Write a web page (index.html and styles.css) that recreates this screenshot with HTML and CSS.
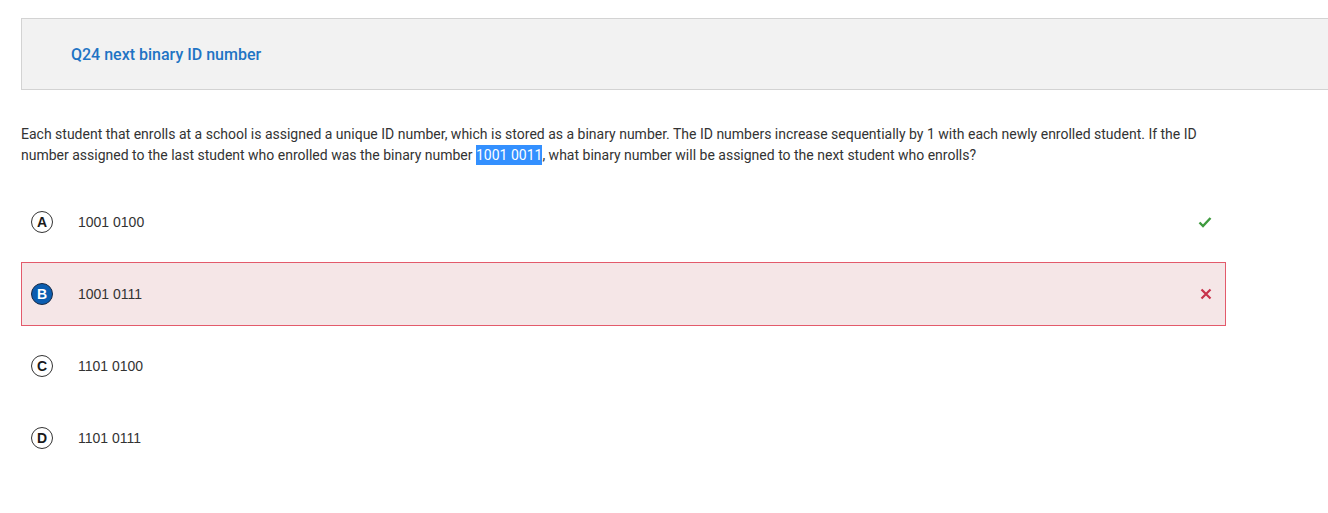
FILE: index.html
```html
<!DOCTYPE html>
<html>
<head>
<meta charset="utf-8">
<link rel="stylesheet" href="styles.css">
</head>
<body>
<div class="header"><h1 class="title">Q24 next binary ID number</h1></div>
<p class="question">Each student that enrolls at a school is assigned a unique ID number, which is stored as a binary number. The ID numbers increase sequentially by 1 with each newly enrolled student. If the ID number assigned to the last student who enrolled was the binary number <span class="sel">1001 0011</span>, what binary number will be assigned to the next student who enrolls?</p>
<ul class="options">
  <li class="option">
    <span class="letter">A</span><span class="text">1001 0100</span>
    <svg class="mark" width="14" height="12" viewBox="0 0 14 12"><path d="M1.5 6.5 L5 10 L12.5 2" fill="none" stroke="#3f9b3f" stroke-width="2.4"/></svg>
  </li>
  <li class="option wrong">
    <span class="letter chosen">B</span><span class="text">1001 0111</span>
    <svg class="mark" width="12" height="12" viewBox="0 0 12 12"><path d="M1.5 1.5 L10.5 10.5 M10.5 1.5 L1.5 10.5" fill="none" stroke="#c8334b" stroke-width="2.2"/></svg>
  </li>
  <li class="option">
    <span class="letter">C</span><span class="text">1101 0100</span>
  </li>
  <li class="option">
    <span class="letter">D</span><span class="text">1101 0111</span>
  </li>
</ul>
</body>
</html>
```
FILE: styles.css
```css
html, body { margin: 0; padding: 0; background: #fff; }
.header {
  margin: 18px 0 0 21px;
  height: 70px;
  border: 1px solid #d3d3d3;
  border-right: none;
  background: #f2f2f2;
  display: flex;
  align-items: center;
}
.title {
  margin: 2px 0 0 49px;
  font: 500 16px/20px Roboto, "Liberation Sans", sans-serif;
  color: #1f74c4;
}
.question {
  margin: 34px 0 0 21px;
  width: 1205px;
  font: 400 14px/21px Roboto, "Liberation Sans", sans-serif;
  color: #333;
}
.sel { display: inline-block; line-height: 20px; background: #3390ff; color: #fff; }
.options {
  list-style: none;
  margin: 24px 0 0 21px;
  padding: 0;
  width: 1205px;
}
.option {
  height: 64px;
  box-sizing: border-box;
  margin-bottom: 8px;
  display: flex;
  align-items: center;
  padding: 0 13px 0 9px;
  border: 1px solid transparent;
  font: 14px/18px "Liberation Sans", Arial, sans-serif;
  color: #333;
}
.option.wrong { background: #f5e6e7; border-color: #e35a6b; }
.letter {
  width: 20px; height: 20px;
  border: 1px solid #333;
  border-radius: 50%;
  display: flex; align-items: center; justify-content: center;
  font: bold 14px/1 "Liberation Sans", Arial, sans-serif;
  color: #1a1a1a;
  flex: none;
}
.letter.chosen { background: #0b5db0; border-color: #1a2a44; color: #fff; }
.text { margin-left: 25px; flex: 1; }
.mark { flex: none; }
```
